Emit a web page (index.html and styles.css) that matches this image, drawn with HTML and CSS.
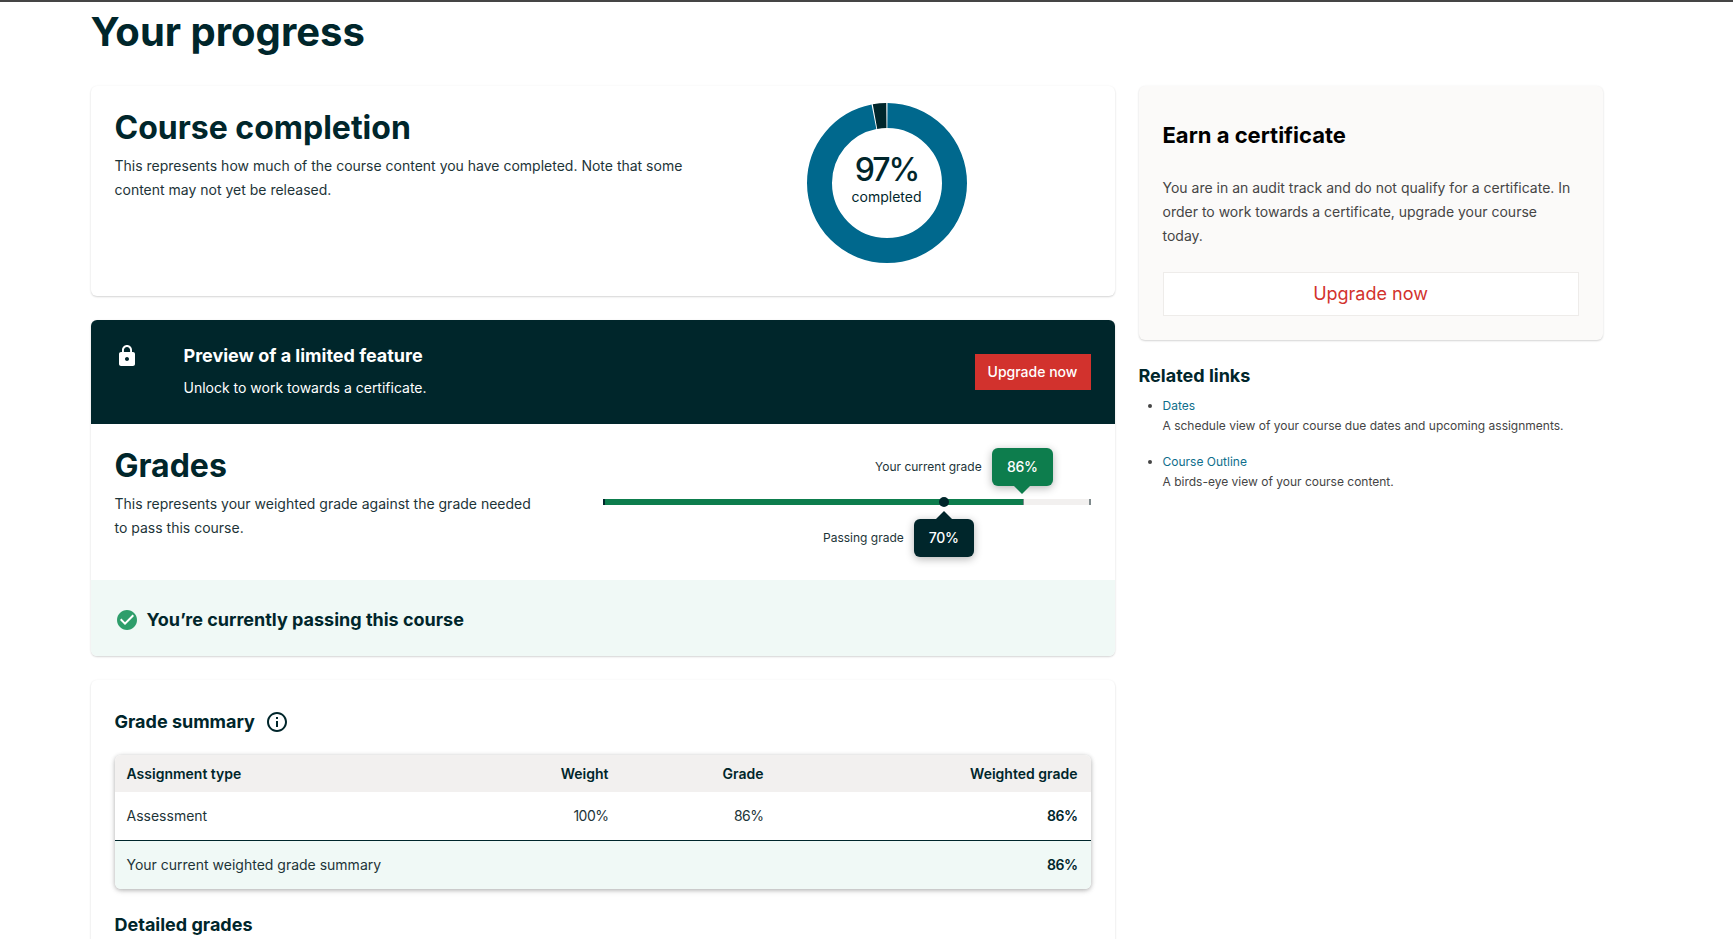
FILE: index.html
```html
<!DOCTYPE html>
<html lang="en">
<head>
<meta charset="utf-8">
<title>Your progress</title>
<link rel="stylesheet" href="styles.css">
</head>
<body>
<div class="topline"></div>
<div class="page">
  <h1 class="page-title">Your progress</h1>
  <div class="layout">
    <main class="main-col">
      <section class="card completion">
        <div class="completion-text">
          <h2 class="section-title">Course completion</h2>
          <p class="body-text">This represents how much of the course content you have completed. Note that some content may not yet be released.</p>
        </div>
        <div class="donut">
          <svg class="donut-svg" width="160" height="160" viewBox="0 0 160 160">
            <circle class="ring ring-done" cx="80" cy="80" r="67.5" pathLength="100" fill="none"></circle>
            <circle class="ring ring-rest" cx="80" cy="80" r="67.5" pathLength="100" fill="none"></circle>
          </svg>
          <div class="donut-label">
            <div class="donut-value">97%</div>
            <div class="donut-caption">completed</div>
          </div>
        </div>
      </section>

      <section class="card grades-card">
        <div class="banner">
          <svg class="lock" width="24" height="24" viewBox="0 0 24 24"><path fill="#fff" d="M18 8h-1V6c0-2.76-2.24-5-5-5S7 3.24 7 6v2H6c-1.1 0-2 .9-2 2v10c0 1.1.9 2 2 2h12c1.1 0 2-.9 2-2V10c0-1.1-.9-2-2-2zm-6 9c-1.1 0-2-.9-2-2s.9-2 2-2 2 .9 2 2-.9 2-2 2zm3.1-9H8.9V6c0-1.71 1.39-3.1 3.1-3.1 1.71 0 3.1 1.39 3.1 3.1v2z"/></svg>
          <div class="banner-text">
            <div class="banner-title">Preview of a limited feature</div>
            <div class="banner-sub">Unlock to work towards a certificate.</div>
          </div>
          <a class="btn-upgrade">Upgrade now</a>
        </div>
        <div class="grades">
          <div class="grades-text">
            <h2 class="section-title">Grades</h2>
            <p class="body-text">This represents your weighted grade against the grade needed to pass this course.</p>
          </div>
          <div class="chart">
            <div class="track">
              <div class="track-fill" style="width:86.6%"></div>
              <div class="pass-dot" style="left:70.1%"></div>
              <div class="marker marker-current" style="left:86.2%">
                <span class="marker-label">Your current grade</span>
                <span class="pill pill-green">86%</span>
              </div>
              <div class="marker marker-pass" style="left:70.1%">
                <span class="marker-label">Passing grade</span>
                <span class="pill pill-dark">70%</span>
              </div>
            </div>
          </div>
        </div>
        <div class="passing">
          <svg width="24" height="24" viewBox="0 0 24 24"><path fill="#2e9e6b" d="M12 2C6.48 2 2 6.48 2 12s4.48 10 10 10 10-4.48 10-10S17.52 2 12 2z"/><path fill="#fff" d="M10 17l-5-5 1.41-1.41L10 14.17l7.59-7.59L19 8l-9 9z"/></svg>
          <span>You’re currently passing this course</span>
        </div>
      </section>

      <section class="card summary">
        <div class="summary-head">
          <h3 class="sub-title">Grade summary</h3>
          <svg width="24" height="24" viewBox="0 0 24 24"><path fill="#00262b" d="M11 7h2v2h-2zm0 4h2v6h-2zm1-9C6.48 2 2 6.48 2 12s4.48 10 10 10 10-4.48 10-10S17.52 2 12 2zm0 18c-4.41 0-8-3.59-8-8s3.59-8 8-8 8 3.59 8 8-3.59 8-8 8z"/></svg>
        </div>
        <div class="table-wrap">
          <table class="grade-table">
            <colgroup><col class="col-type"><col class="col-weight"><col class="col-grade"><col class="col-weighted"></colgroup>
            <thead>
              <tr><th class="left">Assignment type</th><th>Weight</th><th>Grade</th><th>Weighted grade</th></tr>
            </thead>
            <tbody>
              <tr class="row-item"><td class="left">Assessment</td><td class="num">100%</td><td class="num">86%</td><td class="num strong">86%</td></tr>
            </tbody>
            <tfoot>
              <tr class="row-total"><td class="left" colspan="3">Your current weighted grade summary</td><td class="num strong">86%</td></tr>
            </tfoot>
          </table>
        </div>
        <h3 class="sub-title detailed">Detailed grades</h3>
      </section>
    </main>

    <aside class="side-col">
      <section class="card cert">
        <h2 class="cert-title">Earn a certificate</h2>
        <p class="cert-text">You are in an audit track and do not qualify for a certificate. In order to work towards a certificate, upgrade your course today.</p>
        <a class="btn-outline">Upgrade now</a>
      </section>
      <section class="related">
        <h3 class="related-title">Related links</h3>
        <ul class="related-list">
          <li><a class="related-link">Dates</a><div>A schedule view of your course due dates and upcoming assignments.</div></li>
          <li><a class="related-link">Course Outline</a><div>A birds-eye view of your course content.</div></li>
        </ul>
      </section>
    </aside>
  </div>
</div>
</body>
</html>
```
FILE: styles.css
```css
* { box-sizing: border-box; }
html, body { margin: 0; padding: 0; height: 100%; overflow: hidden; background: #fff; }
body { font-family: Inter, "Liberation Sans", sans-serif; color: #00262b; font-size: 14px; line-height: 24px; }
h1, h2, h3, p, ul { margin: 0; padding: 0; }

.topline { height: 2px; background: #454545; }
.page { padding: 8px 0 0 90.5px; }
.page-title { font-size: 40px; line-height: 44px; font-weight: 700; margin-bottom: 32px; letter-spacing: 0; }
.layout { display: flex; gap: 24px; align-items: flex-start; }
.main-col { width: 1024px; display: flex; flex-direction: column; gap: 24px; }
.side-col { width: 464px; }

.card { background: #fff; border-radius: 6px; box-shadow: 0 1px 2px rgba(0,0,0,.16), 0 0 3px rgba(0,0,0,.03); }

.section-title { font-size: 32px; line-height: 40px; font-weight: 700; }
.body-text { margin-top: 6px; color: #1d3438; }

.completion { height: 210px; display: flex; padding: 22px 24px 0; }
.completion-text { width: 590px; }
.donut { position: relative; width: 160px; height: 160px; margin: -5px 0 0 102px; }
.donut-svg { display: block; transform: rotate(-90deg); }
.ring { stroke-width: 25; }
.ring-done { stroke: #00688d; stroke-dasharray: 96.8 3.2; stroke-dashoffset: -0.1; }
.ring-rest { stroke: #00262b; stroke-dasharray: 2.7 97.3; stroke-dashoffset: 2.85; }
.donut-label { position: absolute; left: 0; right: 0; top: 47px; text-align: center; }
.donut-value { font-size: 32px; line-height: 40px; font-weight: 500; letter-spacing: -2px; }
.donut-caption { font-size: 14px; line-height: 20px; margin-top: -3px; }

.grades-card { display: flex; flex-direction: column; }
.banner { height: 104px; background: #00262b; color: #fff; border-radius: 6px 6px 0 0; display: flex; align-items: center; padding: 0 24px; }
.lock { align-self: flex-start; margin-top: 24px; margin-right: 45px; flex: none; }
.banner-text { flex: 1; }
.banner-title { font-size: 18px; line-height: 24px; font-weight: 700; margin-bottom: 8px; }
.banner-sub { font-size: 14px; line-height: 24px; font-weight: 400; }
.btn-upgrade { background: #d2322d; color: #fff; font-size: 14px; font-weight: 500; line-height: 36px; height: 36px; width: 116px; text-align: center; }

.grades { height: 156px; display: flex; padding: 22px 24px 0; }
.grades-text { width: 430px; }
.chart { width: 488px; margin-left: 58px; padding-top: 53px; }
.track { position: relative; height: 6px; background: #f2f0ef; border-left: 2px solid #00262b; border-right: 2px solid #7f8a8c; }
.track-fill { height: 100%; background: #0d7d4d; border-right: 1px solid #7f8a8c; }
.pass-dot { position: absolute; top: -2px; width: 10px; height: 10px; margin-left: -5px; border-radius: 50%; background: #00262b; }
.marker { position: absolute; width: 0; }
.marker-current { bottom: 19px; }
.marker-pass { top: 20px; }
.marker-label { position: absolute; top: 0; white-space: nowrap; font-size: 12px; line-height: 38px; color: #1d3438; }
.marker-current .marker-label { right: 40px; }
.marker-pass .marker-label { right: 40px; }
.pill { display: block; position: relative; width: 61px; margin-left: -30px; height: 38px; line-height: 38px; text-align: center; color: #fff; font-size: 14px; font-weight: 500; letter-spacing: -.3px; border-radius: 6px; box-shadow: 0 2px 8px rgba(0,0,0,.3); }
.pill::after { content: ""; position: absolute; left: 50%; margin-left: -8px; width: 0; height: 0; border-left: 8px solid transparent; border-right: 8px solid transparent; }
.pill-green { background: #0d7d4d; }
.pill-green::after { top: 100%; border-top: 8px solid #0d7d4d; }
.pill-dark { background: #00262b; width: 60px; }
.pill-dark::after { bottom: 100%; border-bottom: 8px solid #00262b; }

.passing { height: 76px; background: #f0f9f6; border-radius: 0 0 6px 6px; display: flex; align-items: center; gap: 8px; padding: 4px 24px 0; font-size: 18px; font-weight: 700; }

.summary { padding: 30px 24px 0; height: 400px; }
.summary-head { display: flex; align-items: center; gap: 10px; height: 24px; }
.sub-title { font-size: 18px; line-height: 24px; font-weight: 700; }
.table-wrap { margin-top: 21px; border-radius: 6px; overflow: hidden; box-shadow: 0 1px 4px rgba(0,0,0,.25), 0 2px 6px rgba(0,0,0,.1); }
.grade-table { width: 100%; border-collapse: collapse; table-layout: fixed; font-size: 14px; }
.col-type { width: 366px; }
.col-weight { width: 141px; }
.col-grade { width: 155px; }
.col-weighted { width: 314px; }
.grade-table th, .grade-table td { text-align: right; padding: 0 13px 0 12px; font-weight: 400; }
.grade-table .left { text-align: left; }
.grade-table th { height: 37px; background: #f2f0ef; font-weight: 600; }
.row-item td { height: 48px; color: #1d3438; }
.row-total td { height: 49px; background: #f0f9f6; border-top: 1px solid #00262b; color: #1d3438; }
.grade-table .num { letter-spacing: -.5px; }
.grade-table .strong { font-weight: 600; color: #00262b; }
.detailed { margin-top: 24px; }

.cert { height: 254px; background: #fbfaf9; padding: 35px 24px 0; }
.cert-title { font-size: 22px; line-height: 28px; font-weight: 700; color: #000; }
.cert-text { margin-top: 27px; color: #454545; }
.btn-outline { display: block; margin-top: 24px; height: 44px; line-height: 42px; text-align: center; background: #fff; border: 1px solid #eeecea; color: #d2322d; font-size: 18px; }

.related { margin-top: 24px; }
.related-title { font-size: 18px; line-height: 24px; font-weight: 700; }
.related-list { margin-top: 8px; padding-left: 24px; font-size: 12px; line-height: 20px; color: #454545; }
.related-list li { margin-bottom: 16px; }
.related-list li::marker { color: #454545; }
.related-link { color: #0f6e8c; }
```
